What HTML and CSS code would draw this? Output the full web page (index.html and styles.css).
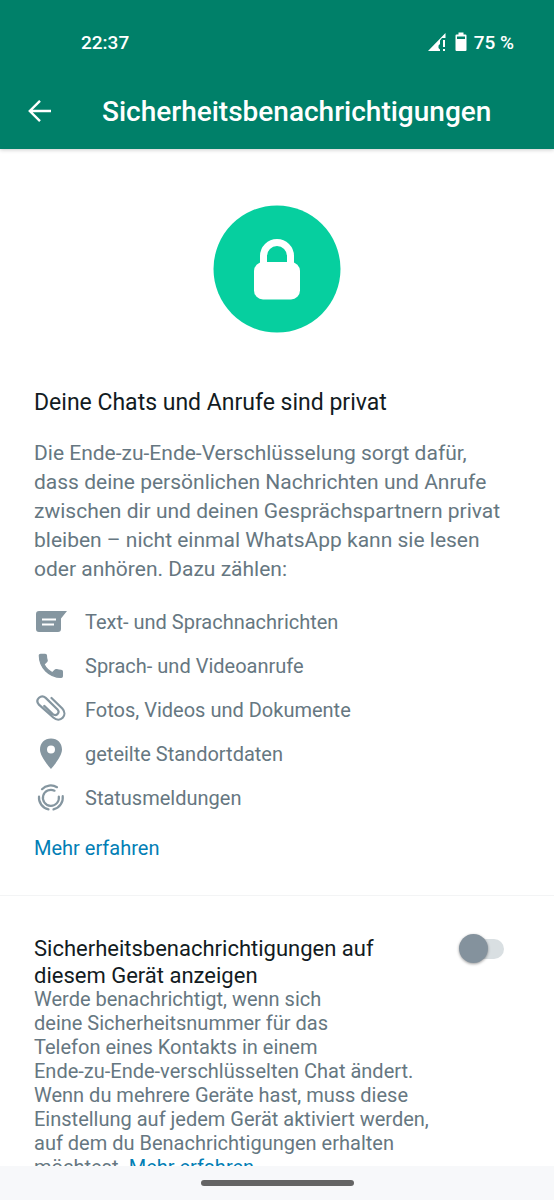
FILE: index.html
```html
<!DOCTYPE html>
<html lang="de">
<head>
<meta charset="utf-8">
<meta name="viewport" content="width=device-width, initial-scale=1">
<title>Sicherheitsbenachrichtigungen</title>
<link rel="stylesheet" href="styles.css">
</head>
<body>
<div class="screen">
  <header class="header">
    <div class="status">
      <span>22:37</span>
      <span class="status-right">
        <svg class="signal" width="18" height="18" viewBox="0 0 18 18" fill="#fff" aria-hidden="true"><path d="M0 18 17.500 0V5H14L12 7.500V11L10.500 12.500V15L12 16.500V18Z"/><path d="M15 7h2v7h-2zM15 16h2v2h-2z"/></svg>
        <svg class="battery" width="12" height="20" viewBox="0 0 12 20" aria-hidden="true"><path fill="#fff" fill-rule="evenodd" d="M3.500 0.500h5v2H10.500Q11.500 2.500 11.500 3.500V18Q11.500 19 10.500 19h-9Q0.500 19 0.500 18V3.500Q0.500 2.500 1.500 2.500h2zM2 4.500v2.500h8V4.500z"/></svg>
        <span>75 %</span>
      </span>
    </div>
    <div class="toolbar">
      <button class="back" aria-label="Zurück"><svg width="24" height="24" viewBox="0 0 24 24" fill="none" stroke="#fff" stroke-width="2.400" aria-hidden="true"><path d="M23 11H2M12 .8 1.800 11 12 21.200"/></svg></button>
      <h1 class="title">Sicherheitsbenachrichtigungen</h1>
    </div>
  </header>
  <main class="content">
    <section class="intro">
      <svg class="lock" width="128" height="128" viewBox="0 0 128 128" aria-hidden="true"><circle cx="64" cy="64" r="63.500" fill="#06cf9f"/><path d="M50.500 60V51a13.500 13.500 0 0 1 27 0v9" fill="none" stroke="#fff" stroke-width="7"/><rect x="41" y="57" width="46" height="37.500" rx="9" fill="#fff"/></svg>
      <h2 class="heading">Deine Chats und Anrufe sind privat</h2>
      <p class="lead">Die Ende-zu-Ende-Verschlüsselung sorgt dafür,<br>dass deine persönlichen Nachrichten und Anrufe<br>zwischen dir und deinen Gesprächspartnern privat<br>bleiben – nicht einmal WhatsApp kann sie lesen<br>oder anhören. Dazu zählen:</p>
      <ul class="list">
        <li><svg width="34" height="32" viewBox="0 0 34 32" aria-hidden="true"><path fill="#8596a0" d="M5 5H33L27 12.500V23Q27 26 24 26H5Q2 26 2 23V8Q2 5 5 5Z"/><path stroke="#fff" stroke-width="2.200" d="M8 13.500h14M8 18.500h12"/></svg>Text- und Sprachnachrichten</li>
        <li><svg width="34" height="32" viewBox="0 0 34 32" aria-hidden="true"><path fill="#8596a0" stroke="#8596a0" stroke-width="1" stroke-linejoin="round" transform="translate(1.500 .5) scale(1.280)" d="M6.620 10.790c1.440 2.830 3.760 5.140 6.590 6.590l2.200-2.200c.27-.27.670-.36 1.020-.24 1.120.37 2.330.57 3.570.57.550 0 1 .45 1 1V20c0 .55-.45 1-1 1-9.390 0-17-7.610-17-17 0-.55.450-1 1-1h3.500c.55 0 1 .45 1 1 0 1.250.2 2.450.57 3.570.11.350.03.740-.25 1.020z"/></svg>Sprach- und Videoanrufe</li>
        <li><svg width="34" height="32" viewBox="0 0 34 32" fill="none" stroke="#8596a0" stroke-width="2.200" stroke-linecap="round" aria-hidden="true"><path d="m17.500 4 10.800 10.500c6 6.500-2 15-9 9L4.700 10.400c-4-5 2.500-10.500 7-6.500l11.800 11.500c3 3.500-1.500 7.500-5 4.500l-8.300-8"/></svg>Fotos, Videos und Dokumente</li>
        <li><svg width="34" height="32" viewBox="0 0 34 32" aria-hidden="true"><path fill="#8596a0" fill-rule="evenodd" d="M17 0.500C10.500 0.500 6 5 6 11.500 6 19 17 31 17 31S28 19 28 11.500C28 5 23.500 0.500 17 0.500Zm0 7a4 4 0 1 1 0 8 4 4 0 0 1 0-8Z"/></svg>geteilte Standortdaten</li>
        <li><svg width="34" height="32" viewBox="0 0 34 32" fill="none" stroke="#8596a0" stroke-width="2.200" stroke-linecap="round" aria-hidden="true"><path d="M8 7.200A12 12 0 0 1 23 5.200M5 14.500A12 12 0 0 0 14.500 27.400M19.500 27.400A12 12 0 0 0 28.700 14"/><path d="M24.800 14.500A8 8 0 1 1 20.500 8.700"/></svg>Statusmeldungen</li>
      </ul>
      <a class="link" href="#">Mehr erfahren</a>
    </section>
    <section class="setting">
      <div class="setting-text">
        <label class="setting-title" for="notify">Sicherheitsbenachrichtigungen auf<br>diesem Gerät anzeigen</label>
        <p class="description">Werde benachrichtigt, wenn sich<br>deine Sicherheitsnummer für das<br>Telefon eines Kontakts in einem<br>Ende-zu-Ende-verschlüsselten Chat ändert.<br>Wenn du mehrere Geräte hast, muss diese<br>Einstellung auf jedem Gerät aktiviert werden,<br>auf dem du Benachrichtigungen erhalten<br>möchtest. <a class="link" href="#">Mehr erfahren</a></p>
      </div>
      <input class="switch" type="checkbox" role="switch" id="notify">
    </section>
  </main>
  <footer class="navigation"><span class="handle"></span></footer>
</div>
</body>
</html>
```
FILE: styles.css
```css
* { box-sizing: border-box; }
body, h1, h2, p, ul { margin: 0; padding: 0; }
body { font-family: Roboto, "Noto Sans", sans-serif; background: #fff; color: #121b22; }
.screen { display: flex; flex-direction: column; height: 100vh; }
.header { flex: none; position: relative; background: #008069; color: #fff; padding: 29px 40px 13px 28px; box-shadow: 0 1px 4px rgba(0, 0, 0, .2); }
.status { display: flex; justify-content: space-between; align-items: center; height: 26px; padding-left: 53px; font-size: 19px; font-weight: 500; }
.status-right { display: flex; align-items: center; }
.signal { margin-right: 9px; }
.battery { margin-right: 7px; }
.toolbar { display: flex; align-items: center; gap: 50px; margin-top: 33px; }
.back { display: flex; width: 24px; padding: 0; border: 0; background: none; cursor: pointer; }
.title { font-size: 28px; line-height: 48px; font-weight: 500; white-space: nowrap; }
.content { flex: 1; min-height: 0; overflow-y: auto; scrollbar-width: none; }
.intro { padding: 56px 34px 35px; border-bottom: 1px solid #f3f4f5; }
.lock { display: block; margin: 0 auto 55px; }
.heading { font-size: 23px; line-height: 30px; font-weight: 400; }
.lead { margin-top: 21px; font-size: 21px; line-height: 29px; color: #667781; }
.list { display: flex; flex-direction: column; gap: 12px; margin: 22px 0; list-style: none; font-size: 20px; line-height: 32px; color: #667781; }
.list li { display: flex; align-items: center; gap: 17px; }
.link { color: #027eb5; text-decoration: none; font-size: 20px; }
.setting { display: flex; align-items: flex-start; justify-content: space-between; padding: 39px 50px 30px 34px; }
.setting-text { flex: 1; max-width: 400px; }
.setting-title { display: block; font-size: 22px; line-height: 27px; }
.description { margin-top: -2px; font-size: 20px; line-height: 24px; color: #667781; white-space: nowrap; }
.switch { appearance: none; position: relative; flex: none; width: 42px; height: 20px; margin: 4px 0 0; border-radius: 10px; background: #d9dfe2; cursor: pointer; }
.switch::before { content: ""; position: absolute; left: -3px; top: -5px; width: 29px; height: 29px; border-radius: 50%; background: #84929d; box-shadow: 0 1px 3px rgba(0, 0, 0, .4); }
.switch:checked::before { left: 16px; background: #008069; }
.navigation { display: flex; flex: none; align-items: center; justify-content: center; height: 34px; background: #f7f8fa; }
.handle { width: 153px; height: 6px; border-radius: 3px; background: #646464; }
```
